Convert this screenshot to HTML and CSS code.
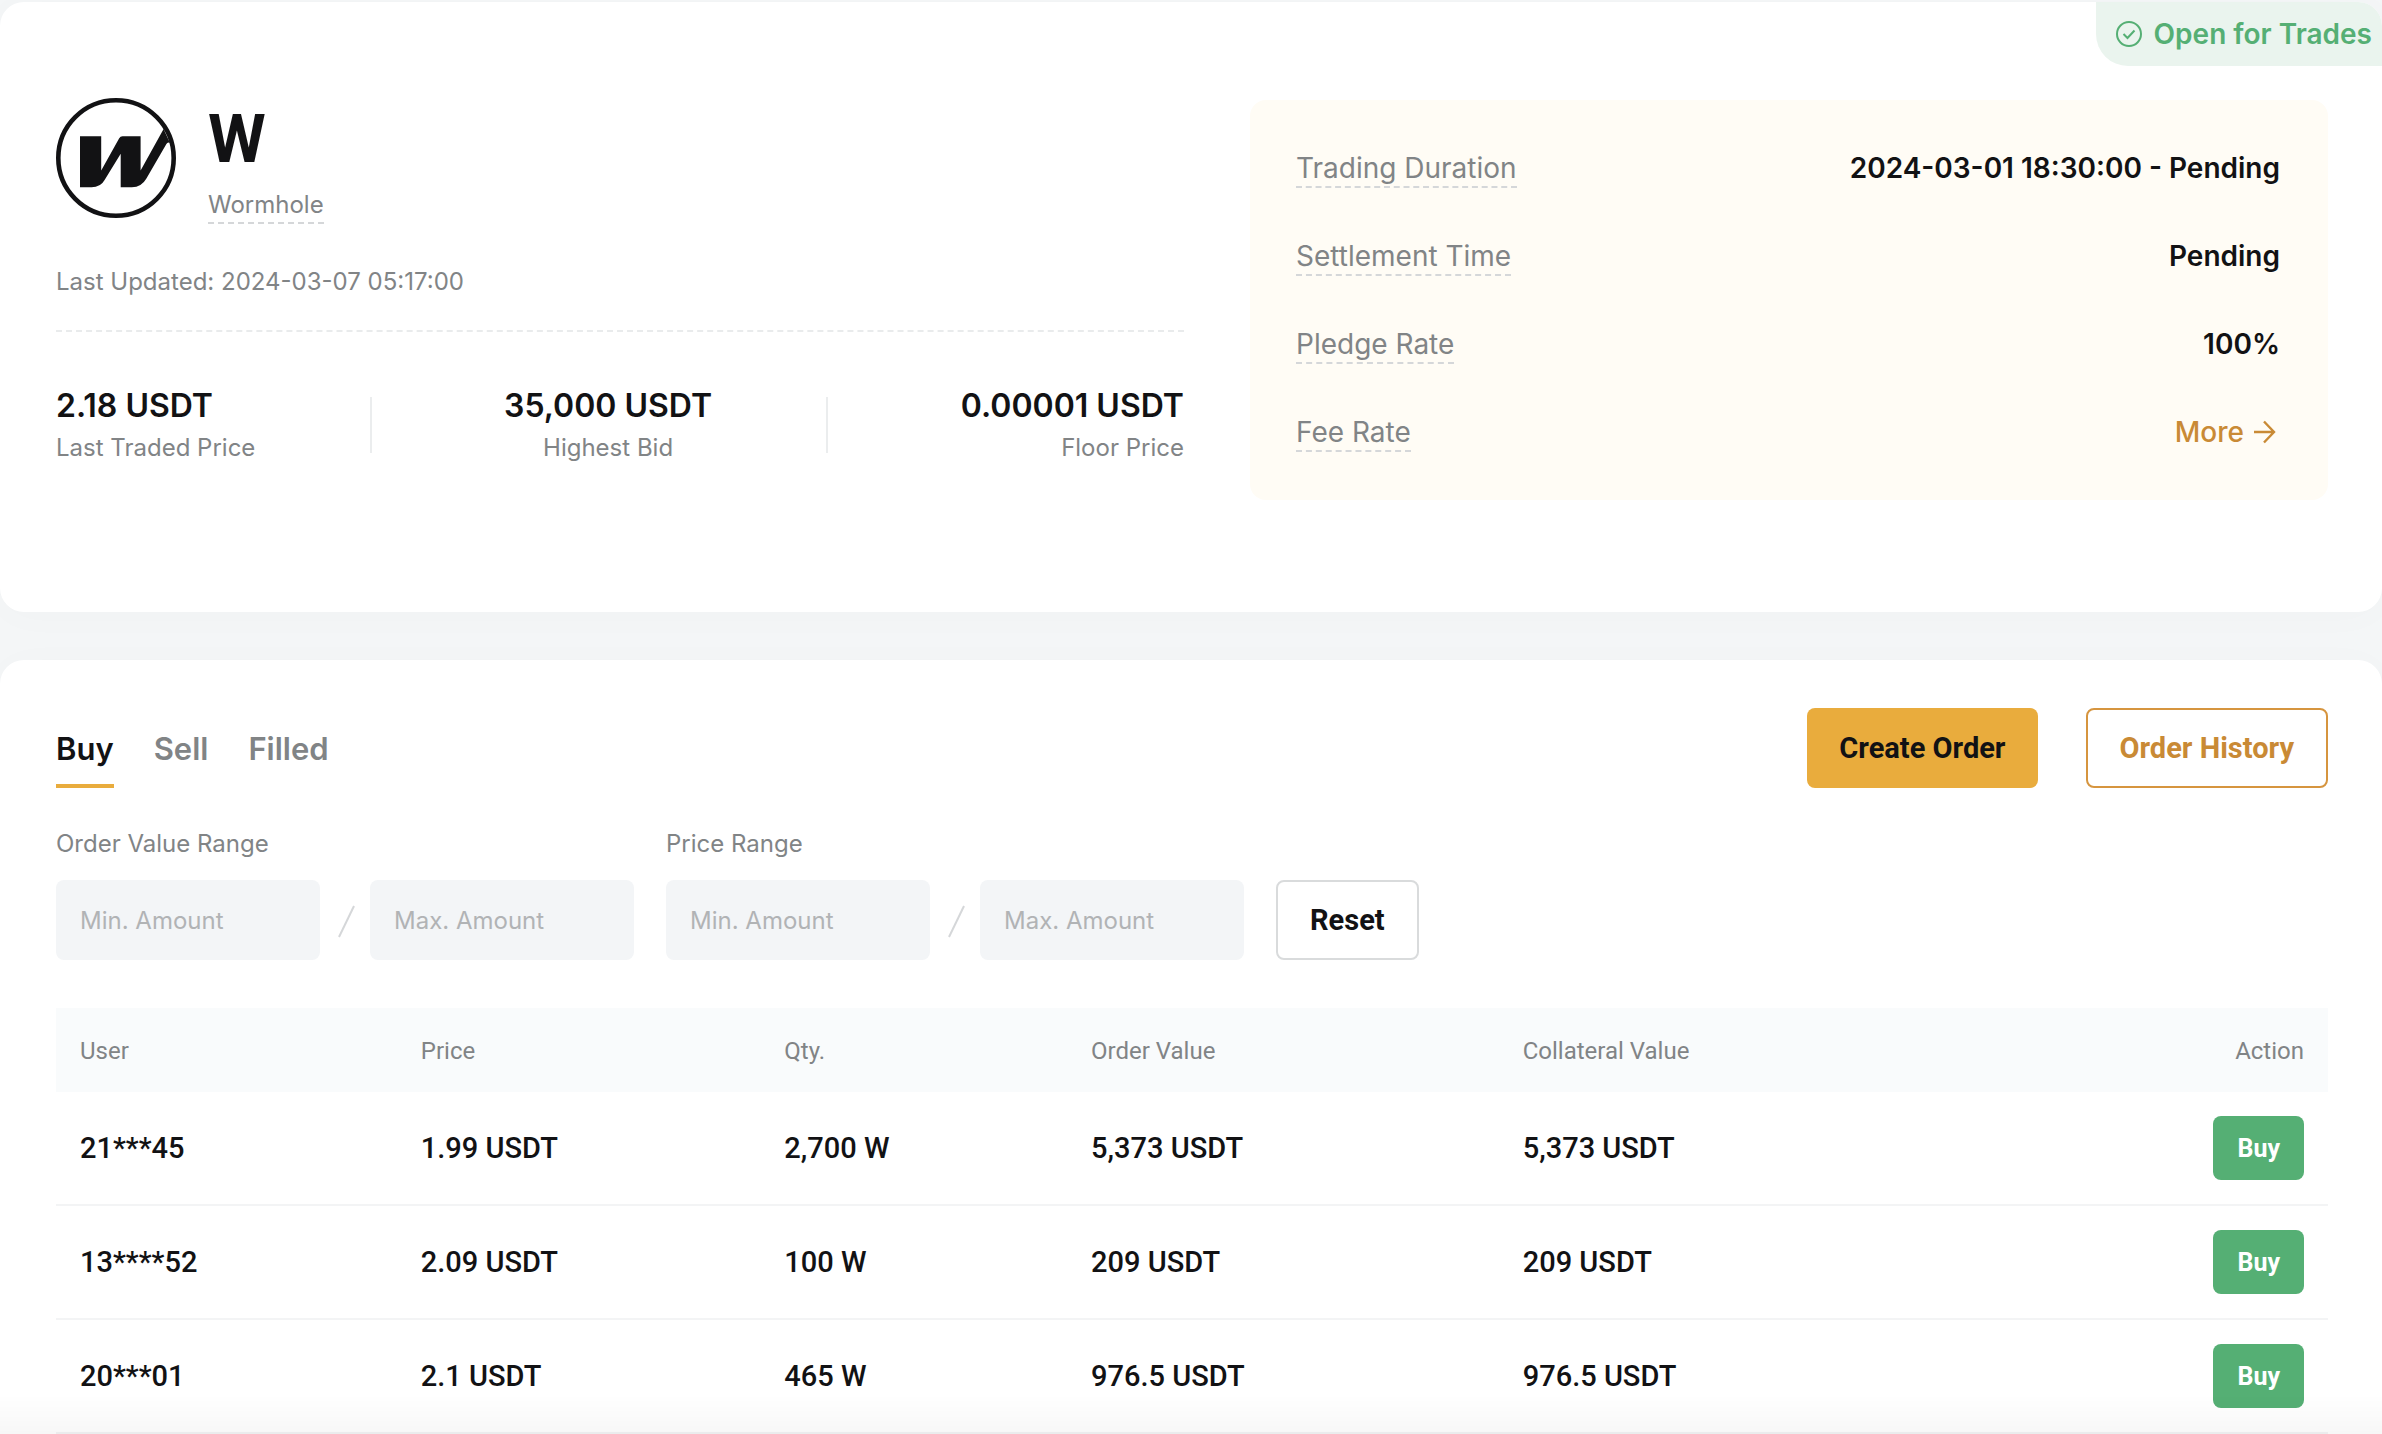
FILE: index.html
```html
<!DOCTYPE html>
<html lang="en">

<head>
    <meta charset="UTF-8">
    <meta name="viewport" content="width=device-width, initial-scale=1.0">
    <title>Wormhole (W) Pre-Market</title>
    <link rel="stylesheet" href="styles.css">
</head>

<body>
    <section class="card overview">
        <div class="status">
            <svg width="26" height="26" viewBox="0 0 26 26" fill="none" stroke="currentColor" stroke-width="2" aria-hidden="true">
                <circle cx="13" cy="13" r="12" />
                <path d="M7.5 13l4 4 7-7.5" />
            </svg>
            <span>Open for Trades</span>
        </div>

        <div class="token">
            <div class="brand">
                <svg class="logo" width="120" height="120" viewBox="0 0 120 120" aria-hidden="true">
                    <circle cx="60" cy="60" r="57.7" fill="none" stroke="#121214" stroke-width="4.6" />
                    <path fill="#121214" d="M24 38.3H45.2V72.5L63.2 40.2Q64.3 38.3 66.5 38.3H84.6V72.5L107.6 31L114 45Q111.6 43.6 110.4 46L90.4 80.6Q85.6 89.3 75.8 89.3H64.7V55.7L48.6 82Q44.6 89.3 35.6 89.3H24Z" />
                </svg>
                <div>
                    <h1>W</h1>
                    <span class="hint brand-name">Wormhole</span>
                </div>
            </div>
            <p class="updated">Last Updated: 2024-03-07 05:17:00</p>
            <div class="stats">
                <div class="stat">
                    <strong>2.18 USDT</strong>
                    <span>Last Traded Price</span>
                </div>
                <i class="divider"></i>
                <div class="stat center">
                    <strong>35,000 USDT</strong>
                    <span>Highest Bid</span>
                </div>
                <i class="divider"></i>
                <div class="stat right">
                    <strong>0.00001 USDT</strong>
                    <span>Floor Price</span>
                </div>
            </div>
        </div>

        <dl class="rules">
            <div class="rule">
                <dt class="hint">Trading Duration</dt>
                <dd>2024-03-01 18:30:00 - Pending</dd>
            </div>
            <div class="rule">
                <dt class="hint">Settlement Time</dt>
                <dd>Pending</dd>
            </div>
            <div class="rule">
                <dt class="hint">Pledge Rate</dt>
                <dd>100%</dd>
            </div>
            <div class="rule">
                <dt class="hint">Fee Rate</dt>
                <dd>
                    <a class="more" href="#">More
                        <svg width="32" height="32" viewBox="0 0 32 32" fill="none" stroke="currentColor" stroke-width="2.4" aria-hidden="true">
                            <path d="M6 16h20M16 5.500l10 10.500-10 10.500" />
                        </svg>
                    </a>
                </dd>
            </div>
        </dl>
    </section>

    <section class="card orders">
        <div class="orders-head">
            <nav class="tabs">
                <button class="active">Buy</button>
                <button>Sell</button>
                <button>Filled</button>
            </nav>
            <div class="actions">
                <button class="btn primary">Create Order</button>
                <button class="btn outline">Order History</button>
            </div>
        </div>

        <form class="filters">
            <div class="filter">
                <label for="value-min">Order Value Range</label>
                <div class="range">
                    <input type="text" id="value-min" placeholder="Min. Amount">
                    <svg width="50" height="36" viewBox="0 0 50 36" stroke="#d5d7d9" stroke-width="2" aria-hidden="true"><path d="M19 35L34 4" /></svg>
                    <input type="text" id="value-max" placeholder="Max. Amount" aria-label="Max. Amount">
                </div>
            </div>
            <div class="filter">
                <label for="price-min">Price Range</label>
                <div class="range">
                    <input type="text" id="price-min" placeholder="Min. Amount">
                    <svg width="50" height="36" viewBox="0 0 50 36" stroke="#d5d7d9" stroke-width="2" aria-hidden="true"><path d="M19 35L34 4" /></svg>
                    <input type="text" id="price-max" placeholder="Max. Amount" aria-label="Max. Amount">
                </div>
            </div>
            <button class="btn reset" type="reset">Reset</button>
        </form>

        <table class="order-table">
            <thead>
                <tr>
                    <th class="col-user">User</th>
                    <th class="col-price">Price</th>
                    <th class="col-qty">Qty.</th>
                    <th class="col-value">Order Value</th>
                    <th>Collateral Value</th>
                    <th class="col-action">Action</th>
                </tr>
            </thead>
            <tbody>
                <tr>
                    <td>21***45</td>
                    <td>1.99 USDT</td>
                    <td>2,700 W</td>
                    <td>5,373 USDT</td>
                    <td>5,373 USDT</td>
                    <td class="col-action"><button class="buy">Buy</button></td>
                </tr>
                <tr>
                    <td>13****52</td>
                    <td>2.09 USDT</td>
                    <td>100 W</td>
                    <td>209 USDT</td>
                    <td>209 USDT</td>
                    <td class="col-action"><button class="buy">Buy</button></td>
                </tr>
                <tr>
                    <td>20***01</td>
                    <td>2.1 USDT</td>
                    <td>465 W</td>
                    <td>976.5 USDT</td>
                    <td>976.5 USDT</td>
                    <td class="col-action"><button class="buy">Buy</button></td>
                </tr>
            </tbody>
        </table>
    </section>
</body>

</html>
```

FILE: styles.css
```css
* {
    box-sizing: border-box;
}

body {
    margin: 0;
    padding-top: 2px;
    background: #f4f6f7;
    color: #121214;
    font-family: Inter, "Liberation Sans", sans-serif;
    font-size: 24px;
    line-height: 32px;
}

/* fade at the bottom of the window */
body::after {
    content: "";
    position: fixed;
    left: 0;
    right: 0;
    bottom: 0;
    height: 40px;
    background: linear-gradient(rgba(0, 0, 0, 0), rgba(0, 0, 0, 0.03));
    pointer-events: none;
}

h1,
p,
dl,
dd {
    margin: 0;
}

button,
input {
    font-family: inherit;
    border: none;
    background: none;
}

button {
    cursor: pointer;
}

.card {
    background: #fff;
    border-radius: 24px;
    box-shadow: 0 4px 40px rgba(20, 40, 60, 0.02);
}

.overview {
    position: relative;
    display: grid;
    grid-template-columns: 1128fr 1078fr;
    column-gap: 66px;
    align-items: start;
    padding: 96px 54px 112px 56px;
    margin-bottom: 48px;
}

.status {
    position: absolute;
    top: 0;
    right: 0;
    display: flex;
    align-items: center;
    gap: 12px;
    height: 64px;
    padding: 0 10px 0 20px;
    border-radius: 0 24px 0 32px;
    background: #eaf4ee;
    color: #55af74;
    font-size: 28px;
    font-weight: 600;
}

.brand {
    display: flex;
    gap: 32px;
}

.brand h1 {
    font-family: Roboto, "Liberation Sans", sans-serif;
    font-size: 66px;
    font-weight: 700;
    line-height: 84px;
    margin-bottom: 4px;
}

.hint {
    border-bottom: 2px dashed #d5d7d9;
    color: #818486;
}

.brand-name {
    display: block;
    padding-top: 2px;
    line-height: 34px;
}

.updated {
    color: #818486;
    margin-top: 42px;
    padding-bottom: 32px;
    border-bottom: 2px dashed #e9ebec;
}

.stats {
    display: flex;
    align-items: center;
    justify-content: space-between;
    padding-top: 54px;
}

.stat {
    display: flex;
    flex-direction: column;
    gap: 6px;
    color: #818486;
}

.stat strong {
    color: #121214;
    font-size: 32px;
    font-weight: 600;
    line-height: 40px;
}

.stat.center {
    text-align: center;
}

.stat.right {
    text-align: right;
}

.divider {
    width: 2px;
    height: 56px;
    margin-right: 18px;
    background: #ebedee;
}

.rules {
    display: flex;
    flex-direction: column;
    gap: 48px;
    margin-top: 2px;
    padding: 48px 48px 48px 46px;
    border-radius: 16px;
    background: #fffcf5;
    font-size: 28px;
}

.rule {
    display: flex;
    justify-content: space-between;
}

.rule dt {
    padding-top: 2px;
    line-height: 36px;
}

.rule dd {
    font-weight: 600;
    line-height: 40px;
}

.more {
    display: flex;
    align-items: center;
    gap: 4px;
    color: #c98a35;
    font-weight: 500;
    text-decoration: none;
}

.orders {
    padding: 48px 54px 0 56px;
    border-radius: 24px 24px 0 0;
}

.orders-head {
    display: flex;
    justify-content: space-between;
}

.tabs {
    display: flex;
    gap: 40px;
}

.tabs button {
    height: 80px;
    padding: 0;
    border-top: 4px solid transparent;
    border-bottom: 4px solid transparent;
    color: #818486;
    font-size: 31px;
    font-weight: 600;
}

.tabs .active {
    color: #121214;
    border-bottom-color: #e9ac3d;
}

.actions {
    display: flex;
    gap: 48px;
}

.btn {
    height: 80px;
    padding: 0 32px;
    border-radius: 8px;
    font-family: Roboto, "Liberation Sans", sans-serif;
    font-size: 29px;
    font-weight: 700;
}

.primary {
    background: #e9ac3d;
    color: #121214;
}

.outline {
    border: 2px solid #d6953f;
    color: #c98a35;
}

.reset {
    border: 2px solid #d9dbdc;
    color: #121214;
}

.filters {
    display: flex;
    align-items: flex-end;
    gap: 32px;
    margin-top: 40px;
}

.filter label {
    display: block;
    color: #818486;
    margin-bottom: 20px;
}

.range {
    display: flex;
    align-items: center;
}

.range input {
    width: 264px;
    height: 80px;
    padding: 0 24px;
    border-radius: 8px;
    background: #f3f5f7;
    color: #121214;
    font-size: 24px;
}

.range input::placeholder {
    color: #b1b3b5;
}

.order-table {
    width: 100%;
    margin-top: 48px;
    border-collapse: separate;
    border-spacing: 0;
    table-layout: fixed;
    font-family: Roboto, "Liberation Sans", sans-serif;
    text-align: left;
}

.order-table th {
    height: 84px;
    padding: 2px 24px 0;
    background: #f9fbfc;
    color: #818486;
    font-weight: 400;
}

.order-table td {
    height: 114px;
    padding: 0 24px;
    border-bottom: 2px solid #f3f4f5;
    font-size: 29px;
    font-weight: 500;
}

.col-user {
    width: 15%;
}

.col-price {
    width: 16%;
}

.col-qty {
    width: 13.5%;
}

.col-value {
    width: 19%;
}

.order-table .col-action {
    text-align: right;
}

.buy {
    height: 64px;
    padding: 0 24px;
    border-radius: 8px;
    background: #55af74;
    color: #fff;
    font-size: 25px;
    font-weight: 700;
    vertical-align: middle;
}
```
